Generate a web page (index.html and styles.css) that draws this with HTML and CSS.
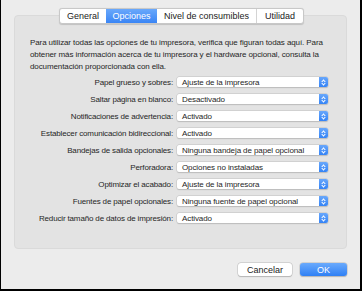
FILE: index.html
```html
<!DOCTYPE html>
<html lang="es">
<head>
<meta charset="utf-8">
<link rel="stylesheet" href="styles.css">
</head>
<body>
<div class="window">
  <div class="tabs">
    <div class="tab">General</div>
    <div class="tab active">Opciones</div>
    <div class="tab">Nivel de consumibles</div>
    <div class="tab">Utilidad</div>
  </div>
  <div class="panel">
    <p class="intro">Para utilizar todas las opciones de tu impresora, verifica que figuran todas aquí. Para obtener más información acerca de tu impresora y el hardware opcional, consulta la documentación proporcionada con ella.</p>
    <div class="rows">
      <div class="label">Papel grueso y sobres:</div><div class="select"><span>Ajuste de la impresora</span><i></i></div>
      <div class="label">Saltar página en blanco:</div><div class="select"><span>Desactivado</span><i></i></div>
      <div class="label">Notificaciones de advertencia:</div><div class="select"><span>Activado</span><i></i></div>
      <div class="label">Establecer comunicación bidireccional:</div><div class="select"><span>Activado</span><i></i></div>
      <div class="label">Bandejas de salida opcionales:</div><div class="select"><span>Ninguna bandeja de papel opcional</span><i></i></div>
      <div class="label">Perforadora:</div><div class="select"><span>Opciones no instaladas</span><i></i></div>
      <div class="label">Optimizar el acabado:</div><div class="select"><span>Ajuste de la impresora</span><i></i></div>
      <div class="label">Fuentes de papel opcionales:</div><div class="select"><span>Ninguna fuente de papel opcional</span><i></i></div>
      <div class="label">Reducir tamaño de datos de impresión:</div><div class="select"><span>Activado</span><i></i></div>
    </div>
  </div>
  <div class="buttons">
    <div class="btn">Cancelar</div>
    <div class="btn primary">OK</div>
  </div>
</div>
</body>
</html>
```
FILE: styles.css
```css
html, body { margin: 0; padding: 0; }
body {
  width: 362px;
  height: 291px;
  font-family: "Liberation Sans", Arial, sans-serif;
  font-size: 8px;
  color: #262626;
}
.window {
  box-sizing: border-box;
  width: 362px;
  height: 291px;
  background: #ececec;
  border-left: 1px solid #000;
  border-right: 2px solid #000;
  border-bottom: 2px solid #000;
  display: flex;
  flex-direction: column;
  position: relative;
  padding: 0 13px 0 13px;
}
.tabs {
  position: absolute;
  top: 8px;
  left: 58px;
  display: flex;
  height: 14px;
  background: #fff;
  border: 1px solid #c8c8c8;
  border-radius: 3px;
  box-shadow: 0 0.5px 1px rgba(0,0,0,0.15);
  z-index: 1;
}
.tab {
  display: flex;
  align-items: center;
  justify-content: center;
  font-size: 9px;
  color: #222;
  border-left: 1px solid #d4d4d4;
}
.tab:first-child { border-left: none; width: 46px; }
.tab:nth-child(2) { width: 51px; }
.tab:nth-child(3) { width: 99px; }
.tab:nth-child(4) { width: 46px; }
.tab.active {
  background: linear-gradient(#6aa8fb, #3a85f5);
  color: #fff;
  border-left: none;
}
.tab.active + .tab { border-left: none; }
.panel {
  margin-top: 15px;
  height: 234px;
  box-sizing: border-box;
  background: #e3e3e3;
  border: 1px solid #dadada;
  border-radius: 4px;
  padding: 21px 0 0 15px;
}
.intro {
  margin: 0;
  width: 300px;
  line-height: 12px;
  font-size: 8px;
  letter-spacing: -0.1px;
  color: #262626;
}
.rows {
  margin-top: 4px;
  display: grid;
  grid-template-columns: 143px 151px;
  column-gap: 4px;
  row-gap: 7px;
  align-items: center;
}
.label {
  text-align: right;
  font-size: 8px;
  letter-spacing: -0.15px;
  white-space: nowrap;
}
.select {
  position: relative;
  height: 10px;
  background: #fff;
  border-radius: 2px;
  box-shadow: 0 0 0 0.5px #c4c4c4, 0 0.5px 1px rgba(0,0,0,0.2);
  display: flex;
  align-items: center;
  font-size: 8px;
  letter-spacing: -0.1px;
}
.select span { padding-left: 5px; flex: 1; white-space: nowrap; }
.select i {
  width: 9px;
  height: 10px;
  border-radius: 0 2px 2px 0;
  background: linear-gradient(#68a7fb, #3584f6);
  position: relative;
}
.select i::before, .select i::after {
  content: "";
  position: absolute;
  left: 2.5px;
  width: 2px;
  height: 2px;
  border-left: 1px solid #fff;
  border-top: 1px solid #fff;
}
.select i::before { top: 2.5px; transform: rotate(45deg); }
.select i::after { top: 4.5px; transform: rotate(-135deg); }
.buttons {
  display: flex;
  justify-content: flex-end;
  gap: 8px;
  margin-top: 14px;
}
.btn {
  height: 13px;
  display: flex;
  align-items: center;
  justify-content: center;
  border-radius: 3px;
  font-size: 9px;
  background: #fff;
  box-shadow: 0 0 0 0.5px #bdbdbd, 0 0.5px 1px rgba(0,0,0,0.25);
  color: #222;
  width: 54px;
}
.btn.primary {
  width: 47px;
  background: linear-gradient(#6aaafc, #2f80f5);
  color: #fff;
}
```
